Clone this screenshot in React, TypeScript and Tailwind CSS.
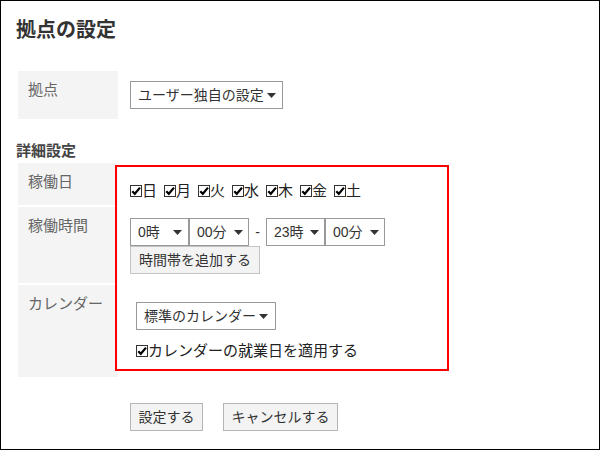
const font = "[font-family:'Liberation_Sans','Noto_Sans_CJK_JP',sans-serif]"

function Caret() {
  return (
    <svg width="9" height="5" viewBox="0 0 9 5" className="shrink-0">
      <polygon points="0,0 9,0 4.5,5" fill="#333" />
    </svg>
  )
}

function Select({ label, className }: { label: string; className: string }) {
  return (
    <div
      className={`flex h-[28px] shrink-0 items-center justify-between whitespace-nowrap border border-[#999] bg-white pl-[7px] text-[14px] text-[#333] ${className}`}
    >
      <span>{label}</span>
      <Caret />
    </div>
  )
}

function Check({ label }: { label: string }) {
  return (
    <span className="flex items-center whitespace-nowrap">
      <svg width="12" height="12" viewBox="0 0 12 12" className="shrink-0">
        <rect x="0.5" y="0.5" width="11" height="11" fill="#fff" stroke="#333" />
        <path d="M2.3 6.2 L4.8 8.8 L10 2.6" fill="none" stroke="#000" strokeWidth="2.2" />
      </svg>
      <span>{label}</span>
    </span>
  )
}

function Label({ text, h }: { text: string; h: string }) {
  return (
    <div className={`w-[100px] shrink-0 bg-[#f4f4f4] pl-[10px] pt-[9px] text-[15px] leading-[20px] text-[#666] ${h}`}>
      {text}
    </div>
  )
}

function Button({ text, className }: { text: string; className: string }) {
  return (
    <div
      className={`flex h-[28px] items-center justify-center whitespace-nowrap border border-[#b5b5b5] bg-[#f3f3f3] text-[14px] text-[#333] ${className}`}
    >
      {text}
    </div>
  )
}

const days = ["日", "月", "火", "水", "木", "金", "土"]

export default function App() {
  return (
    <div className={`relative flex h-[450px] w-[600px] flex-col border border-black bg-white pl-[15px] pt-[15px] ${font}`}>
      <h1 className="text-[20px] font-bold leading-[28px] text-[#333]">拠点の設定</h1>

      {/* 拠点 */}
      <div className="ml-[2px] mt-[27px] flex">
        <Label text="拠点" h="h-[48px]" />
        <div className="pl-[12px] pt-[10px]">
          <Select label="ユーザー独自の設定" className="w-[153px] pr-[6px]" />
        </div>
      </div>

      <h2 className="mt-[22px] text-[15px] font-bold leading-[20px] text-[#444]">詳細設定</h2>

      <div className="ml-[2px] mt-[2px] flex flex-col gap-[2px]">
        {/* 稼働日 */}
        <div className="flex">
          <Label text="稼働日" h="h-[42px]" />
          <div className="flex gap-[7px] pl-[12px] pt-[13px] text-[15px] leading-[20px] text-[#222]">
            {days.map((d) => (
              <Check key={d} label={d} />
            ))}
          </div>
        </div>

        {/* 稼働時間 */}
        <div className="flex">
          <Label text="稼働時間" h="h-[76px]" />
          <div className="flex flex-col items-start pl-[12px] pt-[11px]">
            <div className="flex items-center">
              <Select label="0時" className="w-[59px] pr-[6px]" />
              <Select label="00分" className="w-[60px] pr-[5px]" />
              <span className="w-[17px] text-center text-[14px] text-[#333]">-</span>
              <Select label="23時" className="w-[59px] pr-[5px]" />
              <Select label="00分" className="w-[60px] pr-[5px]" />
            </div>
            <Button text="時間帯を追加する" className="h-[27px] w-[130px] border-[#c4c4c4]" />
          </div>
        </div>

        {/* カレンダー */}
        <div className="flex">
          <Label text="カレンダー" h="h-[92px]" />
          <div className="flex flex-col items-start pl-[18px] pt-[17px]">
            <Select label="標準のカレンダー" className="w-[140px] pr-[7px]" />
            <div className="mt-[11px] text-[15px] leading-[20px] text-[#222]">
              <Check label="カレンダーの就業日を適用する" />
            </div>
          </div>
        </div>
      </div>

      <div className="ml-[114px] mt-[26px] flex gap-[20px]">
        <Button text="設定する" className="w-[73px]" />
        <Button text="キャンセルする" className="w-[115px]" />
      </div>

      {/* 注記の赤枠 */}
      <div className="pointer-events-none absolute left-[114px] top-[164px] h-[206px] w-[334px] border-2 border-[#f00]" />
    </div>
  )
}
